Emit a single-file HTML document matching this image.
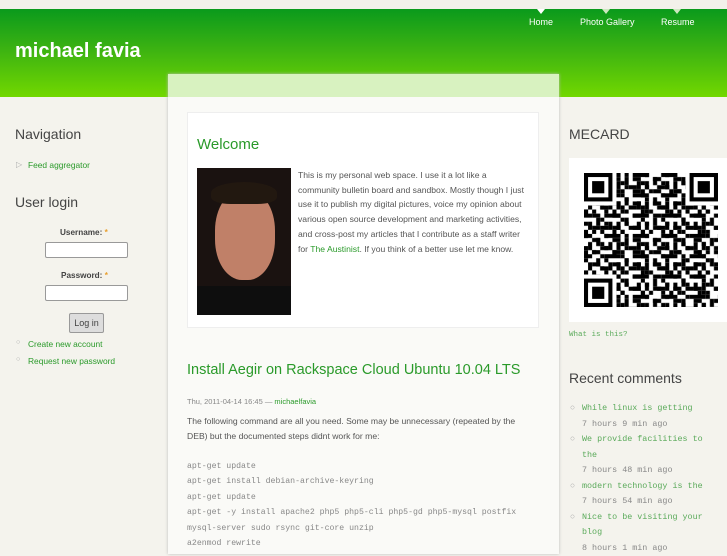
<!DOCTYPE html>
<html><head><meta charset="utf-8"><style>
*{margin:0;padding:0;box-sizing:border-box}
body{width:727px;height:545px;overflow:hidden;background:#f4f3ed;font-family:"Liberation Sans",sans-serif;position:relative}
.a{position:absolute}
.hdr{left:0;top:9px;width:727px;height:88px;background:linear-gradient(#0a9a1c,#3bb212 45%,#72d800)}
.top{left:0;top:0;width:727px;height:9px;background:#f2f1ea}
.nav{color:#fff;font-size:9px;top:17px}
.tri{width:0;height:0;border-left:4px solid transparent;border-right:4px solid transparent;border-top:5px solid #fff;top:9px}
.g{color:#2a9a2a}
.mono{font-family:"Liberation Mono",monospace}
input{position:absolute;width:83px;height:16px;border:1px solid #999;border-radius:2px;background:#fff}
</style></head><body>
<div class="a top"></div>
<div class="a hdr"></div>
<div class="a tri" style="left:537px"></div><div class="a nav" style="left:529px">Home</div>
<div class="a tri" style="left:602px;border-top-color:#cde8c0"></div><div class="a nav" style="left:580px">Photo Gallery</div>
<div class="a tri" style="left:673px;border-top-color:#cde8c0"></div><div class="a nav" style="left:661px">Resume</div>
<div class="a" style="left:15px;top:40px;color:#fff;font-size:20px;font-weight:bold">michael favia</div>
<div class="a" style="left:168px;top:74px;width:391px;height:480px;background:#fafaf7;box-shadow:0 0 3px #bbb"></div>
<div class="a" style="left:168px;top:74px;width:391px;height:23px;background:#d8f2c0"></div>
<div class="a" style="left:187px;top:112px;width:352px;height:216px;background:#fff;border:1px solid #eee"></div>
<div class="a g" style="left:197px;top:136px;font-size:15px">Welcome</div>
<div class="a" style="left:197px;top:168px;width:94px;height:147px;background:#1a1210;overflow:hidden">
<div class="a" style="left:18px;top:22px;width:60px;height:90px;border-radius:45%;background:#c08068"></div>
<div class="a" style="left:14px;top:14px;width:66px;height:22px;border-radius:50% 50% 30% 30%;background:#221810"></div>
<div class="a" style="left:0;top:118px;width:94px;height:30px;background:#0e0e0e"></div>
</div>
<div class="a" style="left:298px;top:168px;width:232px;font-size:8.6px;line-height:14.7px;color:#555">This is my personal web space. I use it a lot like a community bulletin board and sandbox. Mostly though I just use it to publish my digital pictures, voice my opinion about various open source development and marketing activities, and cross-post my articles that I contribute as a staff writer for <span class="g">The Austinist</span>. If you think of a better use let me know.</div>
<div class="a g" style="left:187px;top:362px;font-size:14.5px">Install Aegir on Rackspace Cloud Ubuntu 10.04 LTS</div>
<div class="a" style="left:187px;top:397px;font-size:7.5px;color:#888">Thu, 2011-04-14 16:45 — <span class="g">michaelfavia</span></div>
<div class="a" style="left:187px;top:414px;width:350px;font-size:8.6px;line-height:14.7px;color:#555">The following command are all you need. Some may be unnecessary (repeated by the DEB) but the documented steps didnt work for me:</div>
<div class="a mono" style="left:187px;top:459px;font-size:8.2px;line-height:15.4px;color:#888;white-space:pre">apt-get update
apt-get install debian-archive-keyring
apt-get update
apt-get -y install apache2 php5 php5-cli php5-gd php5-mysql postfix
mysql-server sudo rsync git-core unzip
a2enmod rewrite</div>
<!-- left -->
<div class="a" style="left:15px;top:126px;font-size:14px;color:#444">Navigation</div>
<div class="a" style="left:16px;top:160px;font-size:8px;color:#aaa">▷</div>
<div class="a g" style="left:28px;top:160px;font-size:8.4px">Feed aggregator</div>
<div class="a" style="left:15px;top:194px;font-size:14px;color:#444">User login</div>
<div class="a" style="left:60px;top:228px;font-size:8.2px;font-weight:bold;color:#444">Username: <span style="color:#e8a030">*</span></div>
<input style="left:45px;top:242px">
<div class="a" style="left:61px;top:271px;font-size:8.2px;font-weight:bold;color:#444">Password: <span style="color:#e8a030">*</span></div>
<input style="left:45px;top:285px">
<div class="a" style="left:69px;top:313px;width:35px;height:20px;border:1px solid #999;border-radius:2px;background:#ddd;font-size:9px;color:#444;text-align:center;line-height:18px">Log in</div>
<div class="a" style="left:16px;top:339px;font-size:7px;color:#aaa">○</div><div class="a g" style="left:28px;top:339px;font-size:8.4px">Create new account</div>
<div class="a" style="left:16px;top:356px;font-size:7px;color:#aaa">○</div><div class="a g" style="left:28px;top:356px;font-size:8.4px">Request new password</div>
<!-- right -->
<div class="a" style="left:569px;top:126px;font-size:14px;color:#444">MECARD</div>
<div class="a" style="left:569px;top:158px;width:158px;height:164px;background:#fff"></div>
<svg class="a" style="left:584px;top:173px" width="134" height="134" viewBox="0 0 33 33">
<defs><pattern id="p" width="7" height="5" patternUnits="userSpaceOnUse">
<rect x="0" y="0" width="2" height="1"/><rect x="3" y="1" width="1" height="2"/><rect x="5" y="0" width="2" height="1"/><rect x="1" y="2" width="1" height="2"/><rect x="4" y="3" width="2" height="1"/><rect x="6" y="2" width="1" height="2"/><rect x="0" y="4" width="1" height="1"/><rect x="2" y="4" width="1" height="1"/></pattern>
<pattern id="q" width="5" height="3" patternUnits="userSpaceOnUse"><rect x="0" y="0" width="1" height="1"/><rect x="2" y="1" width="2" height="1"/><rect x="4" y="2" width="1" height="1"/></pattern></defs>
<rect width="33" height="33" fill="url(#p)"/><rect width="33" height="33" fill="url(#q)"/>
<g fill="#fff"><rect width="8" height="8"/><rect x="25" width="8" height="8"/><rect y="25" width="8" height="8"/></g>
<g fill="none" stroke="#000"><rect x=".5" y=".5" width="6" height="6"/><rect x="26.5" y=".5" width="6" height="6"/><rect x=".5" y="26.5" width="6" height="6"/></g>
<rect x="2" y="2" width="3" height="3"/><rect x="28" y="2" width="3" height="3"/><rect x="2" y="28" width="3" height="3"/>
</svg>
<div class="a mono g" style="left:569px;top:331px;font-size:7.5px;color:#5aaa5a">What is this?</div>
<div class="a" style="left:569px;top:370px;font-size:14px;color:#444">Recent comments</div>
<div class="a mono" style="left:570px;top:401px;width:150px;font-size:8.4px;line-height:15.5px;color:#888">
<div style="position:relative;padding-left:12px"><span style="position:absolute;left:0;color:#aaa">○</span><span style="color:#5aaa5a">While linux is getting</span><br>7 hours 9 min ago</div>
<div style="position:relative;padding-left:12px"><span style="position:absolute;left:0;color:#aaa">○</span><span style="color:#5aaa5a">We provide facilities to the</span><br>7 hours 48 min ago</div>
<div style="position:relative;padding-left:12px"><span style="position:absolute;left:0;color:#aaa">○</span><span style="color:#5aaa5a">modern technology is the</span><br>7 hours 54 min ago</div>
<div style="position:relative;padding-left:12px"><span style="position:absolute;left:0;color:#aaa">○</span><span style="color:#5aaa5a">Nice to be visiting your blog</span><br>8 hours 1 min ago</div>
</div>
</body></html>
